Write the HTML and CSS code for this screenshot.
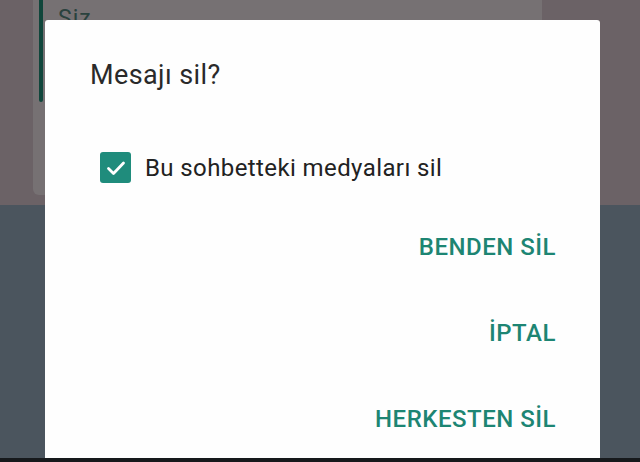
FILE: index.html
```html
<!DOCTYPE html>
<html lang="tr">
<head>
<meta charset="utf-8">
<title>Mesajı sil?</title>
<link rel="stylesheet" href="styles.css">
</head>
<body>
<div class="screen">
  <div class="backdrop-top">
    <div class="bubble">
      <div class="bubble-bar"></div>
      <div class="bubble-name">Siz</div>
    </div>
  </div>
  <div class="backdrop-bottom"></div>
  <div class="navbar"></div>

  <div class="dialog">
    <div class="title">Mesajı sil?</div>
    <label class="check-row">
      <span class="checkbox">
        <svg viewBox="0 0 24 24" width="24" height="24"><path d="M4.5 12.5l5 5L19.5 7" fill="none" stroke="#fff" stroke-width="2.8" stroke-linecap="round" stroke-linejoin="round"/></svg>
      </span>
      <span class="check-label">Bu sohbetteki medyaları sil</span>
    </label>
    <div class="actions">
      <div class="action">BENDEN SİL</div>
      <div class="action">İPTAL</div>
      <div class="action">HERKESTEN SİL</div>
    </div>
  </div>
</div>
</body>
</html>
```

FILE: styles.css
```css
* { box-sizing: border-box; }
html, body { margin: 0; padding: 0; }
body {
  width: 640px;
  height: 462px;
  overflow: hidden;
  font-family: Roboto, "Noto Sans", "Liberation Sans", sans-serif;
}
.screen {
  position: relative;
  width: 640px;
  height: 462px;
  display: flex;
  flex-direction: column;
}
.backdrop-top {
  height: 205px;
  background: #6b6266;
  padding-left: 33px;
}
.bubble {
  position: relative;
  width: 509px;
  height: 195px;
  background: #767173;
  border-radius: 0 0 6px 6px;
  padding: 0 0 0 25px;
}
.bubble-bar {
  position: absolute;
  left: 6px;
  top: 0;
  width: 4px;
  height: 102px;
  background: #10463b;
  border-radius: 0 0 2px 2px;
}
.bubble-name {
  color: #2a423e;
  font-size: 23px;
  line-height: 24px;
  padding-top: 7px;
  letter-spacing: 1px;
}
.backdrop-bottom {
  flex: 1;
  background: #4b555e;
}
.navbar {
  height: 4px;
  background: #16191c;
}
.dialog {
  position: absolute;
  left: 45px;
  top: 20px;
  width: 555px;
  height: 438px;
  background: #fefefe;
  border-radius: 3px 3px 0 0;
  padding: 45px 44px 0 45px;
  display: flex;
  flex-direction: column;
}
.title {
  font-size: 27px;
  line-height: 28px;
  letter-spacing: 0.4px;
  color: #2a2a2a;
  margin-top: -4px;
}
.check-row {
  display: flex;
  align-items: center;
  margin-top: 63px;
  margin-left: 10px;
}
.checkbox {
  width: 31px;
  height: 31px;
  border-radius: 3px;
  background: #1f8c7c;
  display: flex;
  align-items: center;
  justify-content: center;
}
.check-label {
  margin-left: 14px;
  font-size: 24px;
  letter-spacing: 0.4px;
  color: #222;
}
.actions {
  display: flex;
  flex-direction: column;
  align-items: flex-end;
  margin-top: 51px;
  gap: 60px;
}
.action {
  font-size: 24px;
  line-height: 26px;
  font-weight: 500;
  letter-spacing: 0.5px;
  color: #1d8573;
}
```
